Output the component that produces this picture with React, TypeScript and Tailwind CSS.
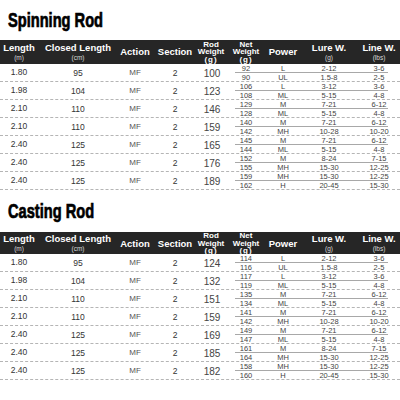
type Sub = [string, string, string, string];
type Row = { len: string; closed: string; rod: string; a: Sub; b: Sub };

const spinning: Row[] = [
  { len: "1.80", closed: "95", rod: "100", a: ["92", "L", "2-12", "3-6"], b: ["90", "UL", "1.5-8", "2-5"] },
  { len: "1.98", closed: "104", rod: "123", a: ["106", "L", "3-12", "3-6"], b: ["108", "ML", "5-15", "4-8"] },
  { len: "2.10", closed: "110", rod: "146", a: ["129", "M", "7-21", "6-12"], b: ["128", "ML", "5-15", "4-8"] },
  { len: "2.10", closed: "110", rod: "159", a: ["140", "M", "7-21", "6-12"], b: ["142", "MH", "10-28", "10-20"] },
  { len: "2.40", closed: "125", rod: "165", a: ["145", "M", "7-21", "6-12"], b: ["144", "ML", "5-15", "4-8"] },
  { len: "2.40", closed: "125", rod: "176", a: ["152", "M", "8-24", "7-15"], b: ["155", "MH", "15-30", "12-25"] },
  { len: "2.40", closed: "125", rod: "189", a: ["159", "MH", "15-30", "12-25"], b: ["162", "H", "20-45", "15-30"] },
];

const casting: Row[] = [
  { len: "1.80", closed: "95", rod: "124", a: ["114", "L", "2-12", "3-6"], b: ["116", "UL", "1.5-8", "2-5"] },
  { len: "1.98", closed: "104", rod: "132", a: ["117", "L", "3-12", "3-6"], b: ["119", "ML", "5-15", "4-8"] },
  { len: "2.10", closed: "110", rod: "151", a: ["135", "M", "7-21", "6-12"], b: ["134", "ML", "5-15", "4-8"] },
  { len: "2.10", closed: "110", rod: "159", a: ["141", "M", "7-21", "6-12"], b: ["142", "MH", "10-28", "10-20"] },
  { len: "2.40", closed: "125", rod: "169", a: ["149", "M", "7-21", "6-12"], b: ["147", "ML", "5-15", "4-8"] },
  { len: "2.40", closed: "125", rod: "185", a: ["161", "M", "8-24", "7-15"], b: ["164", "MH", "15-30", "12-25"] },
  { len: "2.40", closed: "125", rod: "182", a: ["158", "MH", "15-30", "12-25"], b: ["160", "H", "20-45", "15-30"] },
];

const cols = "grid grid-cols-[38px_80px_34px_46px_28px_174px]";
const subCols = "grid grid-cols-[40px_34px_58px_42px]";

function SubRow({ s, line }: { s: Sub; line?: boolean }) {
  return (
    <div className={`${subCols} h-[9px] items-center text-[7.5px] leading-none text-[#444] ${line ? "relative" : ""}`}>
      {s.map((v, i) => (
        <span key={i} className="text-center">{v}</span>
      ))}
      {line && <div className="absolute left-[9px] right-[12px] bottom-0 border-b border-[#a8a8a8]" />}
    </div>
  );
}

function Head({ main, sub }: { main: string; sub?: string }) {
  return (
    <div className="flex flex-col items-center leading-none">
      <span className="text-[9.5px] font-bold">{main}</span>
      {sub && <span className="text-[6.5px] text-[#d8d8d8] mt-[3px]">{sub}</span>}
    </div>
  );
}

function Section({ title, rows, second }: { title: string; rows: Row[]; second?: boolean }) {
  return (
    <section>
      <div className={`${second ? "h-[42px] pt-[11px]" : "h-[40px] pt-[10px]"} pl-[8px]`}>
        <h2 className="inline-block text-[19.5px] leading-[20px] font-bold text-black [font-family:'Liberation_Sans',Arial,sans-serif] [-webkit-text-stroke:0.7px_black] scale-x-[0.75] origin-left">
          {title}
        </h2>
      </div>
      <div className={`${cols} ${second ? "h-[22px]" : "h-[24px]"} bg-[#262626] text-white items-center`}>
        <Head main="Length" sub="(m)" />
        <Head main="Closed Length" sub="(cm)" />
        <Head main="Action" />
        <Head main="Section" />
        <div className="flex flex-col items-center text-[8px] font-bold leading-[7.5px] -ml-[2px]">
          <span>Rod</span>
          <span>Weight</span>
          <span className="tracking-[1px]">(g)</span>
        </div>
        <div className={`${subCols} items-center`}>
          <div className="flex flex-col items-center text-[8px] font-bold leading-[7.5px]">
            <span>Net</span>
            <span>Weight</span>
            <span className="tracking-[1px]">(g)</span>
          </div>
          <Head main="Power" />
          <Head main="Lure W." sub="(g)" />
          <Head main="Line W." sub="(lbs)" />
        </div>
      </div>
      {rows.map((r, i) => (
        <div key={i} className={`${cols} h-[18px] items-center border-b border-dashed border-[#b5b5b5] text-[#333]`}>
          <span className="text-center text-[8.5px] -mt-[2px]">{r.len}</span>
          <span className="text-center text-[8.5px] mt-[1px]">{r.closed}</span>
          <span className="text-center text-[8px] text-[#555]">MF</span>
          <span className="text-center text-[8.5px] mt-[1px]">2</span>
          <span className="text-center text-[10px] text-[#444]">{r.rod}</span>
          <div className="flex flex-col">
            <SubRow s={r.a} line />
            <SubRow s={r.b} />
          </div>
        </div>
      ))}
    </section>
  );
}

export default function App() {
  return (
    <div className="w-[400px] h-[400px] bg-white overflow-hidden [font-family:'Liberation_Sans',Arial,sans-serif]">
      <Section title="Spinning Rod" rows={spinning} />
      <Section title="Casting Rod" rows={casting} second />
    </div>
  );
}
